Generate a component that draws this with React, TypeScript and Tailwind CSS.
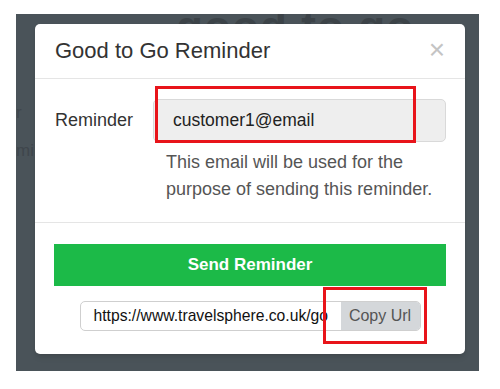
const font = { fontFamily: '"Liberation Sans", Arial, sans-serif' };

const App = () => {
  return (
    <main className="w-[500px] h-[389px] bg-white overflow-hidden" style={font}>
      <div className="ml-[16px] mt-[14px] w-[463px] h-[357px] bg-[#4a5359] relative overflow-hidden">
        {/* page behind the overlay */}
        <div className="absolute left-[160px] -top-[20px] text-[44px] font-bold text-[#3c4348] tracking-wide">
          good to go
        </div>
        <div className="absolute left-[0px] top-[86px] text-[17px] text-[#3f464c]">r</div>
        <div className="absolute left-[0px] top-[124px] text-[17px] text-[#3f464c]">mi</div>

        {/* modal */}
        <div className="relative ml-[19px] mt-[10px] w-[430px] h-[330px] bg-white rounded-[5px] shadow-md flex flex-col">
          <div className="h-[55px] flex items-center justify-between pl-[20px] pr-[20px] border-b border-[#e5e5e5]">
            <h2 className="text-[22px] text-[#333] leading-none">Good to Go Reminder</h2>
            <span className="text-[28px] text-[#c4c4c4] leading-none -mt-[2px]">×</span>
          </div>

          <div className="h-[144px] border-b border-[#e5e5e5] pl-[20px] pr-[19px] pt-[20px]">
            <div className="flex items-center">
              <label className="w-[98px] text-[18px] text-[#333]">Reminder</label>
              <div className="flex-1 h-[43px] bg-[#eeeeee] border border-[#d9d9d9] rounded-[5px] flex items-center pl-[19px] text-[17.5px] text-[#222]">
                customer1@email
              </div>
            </div>
            <p className="ml-[111px] mt-[7px] text-[18px] leading-[27px] text-[#555]">
              This email will be used for the
              <br />
              purpose of sending this reminder.
            </p>
          </div>

          <div className="flex-1 flex flex-col items-center pt-[21px] px-[19px]">
            <button className="w-full h-[42px] bg-[#1cba48] text-white font-bold text-[17px]">
              Send Reminder
            </button>
            <div className="mt-[15px] w-[341px] h-[30px] border border-[#cfcfcf] rounded-[5px] flex overflow-hidden">
              <div className="w-[260px] pl-[13px] flex items-center text-[15.7px] text-[#111] whitespace-nowrap overflow-hidden">
                https://www.travelsphere.co.uk/go
              </div>
              <div className="flex-1 bg-[#d4d7da] flex items-center justify-center text-[16px] text-[#555]">
                Copy Url
              </div>
            </div>
          </div>

          {/* annotation boxes */}
          <div className="absolute left-[120px] top-[62px] w-[261px] h-[57px] border-[3px] border-[#e8141a]" />
          <div className="absolute left-[288px] top-[263px] w-[104px] h-[57px] border-[3px] border-[#e8141a]" />
        </div>
      </div>
    </main>
  );
};

export default App;
